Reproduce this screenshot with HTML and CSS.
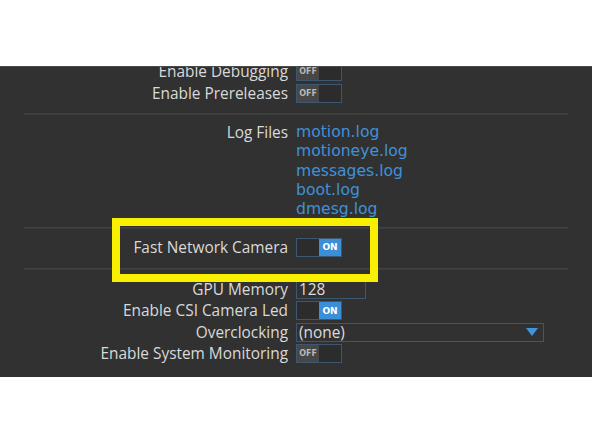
FILE: index.html
```html
<!DOCTYPE html>
<html>
<head>
<meta charset="utf-8">
<link rel="stylesheet" href="styles.css">
</head>
<body>
<div class="top"></div>
<div class="panel">
  <div class="content">
    <div class="group first">
      <div class="row"><div class="label">Enable Debugging</div><div class="value"><span class="toggle off"><span class="half l">OFF</span><span class="half r"></span></span></div></div>
      <div class="row"><div class="label">Enable Prereleases</div><div class="value"><span class="toggle off"><span class="half l">OFF</span><span class="half r"></span></span></div></div>
    </div>
    <div class="sep"></div>
    <div class="group logs">
      <div class="row log-row"><div class="label">Log Files</div>
        <div class="value links">
          <a>motion.log</a>
          <a>motioneye.log</a>
          <a>messages.log</a>
          <a>boot.log</a>
          <a>dmesg.log</a>
        </div>
      </div>
    </div>
    <div class="sep"></div>
    <div class="group fast">
      <div class="row"><div class="label">Fast Network Camera</div><div class="value"><span class="toggle on"><span class="half l"></span><span class="half r">ON</span></span></div></div>
    </div>
    <div class="sep"></div>
    <div class="group last">
      <div class="row"><div class="label">GPU Memory</div><div class="value"><span class="input">128</span></div></div>
      <div class="row"><div class="label">Enable CSI Camera Led</div><div class="value"><span class="toggle on"><span class="half l"></span><span class="half r">ON</span></span></div></div>
      <div class="row"><div class="label">Overclocking</div><div class="value"><span class="select">(none)<svg class="arrow" width="12" height="8" viewBox="0 0 12 8"><polygon points="0,0 12,0 6,8" fill="#3d95e0"/></svg></span></div></div>
      <div class="row"><div class="label">Enable System Monitoring</div><div class="value"><span class="toggle off"><span class="half l">OFF</span><span class="half r"></span></span></div></div>
    </div>
  </div>
  <div class="highlight"></div>
</div>
</body>
</html>
```
FILE: styles.css
```css
html, body {
  margin: 0;
  padding: 0;
  background: #ffffff;
  width: 592px;
  height: 444px;
  overflow: hidden;
  font-family: "Open Sans", "DejaVu Sans", sans-serif;
}
.top {
  height: 66px;
  background: #ffffff;
}
.panel {
  position: relative;
  height: 311px;
  background: #313131;
  border-top: 1px solid #4a4a4a;
  box-sizing: border-box;
  overflow: hidden;
}
.content {
  margin-top: -6px;
  display: flex;
  flex-direction: column;
}
.group {
  display: flex;
  flex-direction: column;
}
.first { padding-bottom: 9px; }
.logs { padding-top: 8px; padding-bottom: 7px; }
.fast { padding-top: 8px; padding-bottom: 10px; }
.last { padding-top: 8px; }
.row {
  display: grid;
  grid-template-columns: 288px 1fr;
  column-gap: 8px;
  height: 21.6px;
  align-items: center;
}
.label {
  text-align: right;
  color: #d9d9d9;
  font-size: 15.4px;
  white-space: nowrap;
}
.value {
  display: flex;
  align-items: center;
}
.log-row {
  height: auto;
  align-items: start;
}
.links {
  flex-direction: column;
  align-items: flex-start;
}
.links a {
  display: block;
  color: #3f92d8;
  font-family: "DejaVu Sans", sans-serif;
  font-size: 15.6px;
  line-height: 19.3px;
  height: 19.3px;
}
.log-row .label { line-height: 19.3px; }
.sep {
  margin: 0 24px;
  height: 2px;
  background: #3b3b3b;
  border-top: 1px solid #414141;
  box-sizing: border-box;
}
.toggle {
  display: flex;
  width: 46px;
  height: 19px;
  border: 1px solid #3e5770;
  box-sizing: border-box;
  background: #2c2c2c;
}
.half {
  flex: 1;
  display: flex;
  align-items: center;
  justify-content: center;
  font-size: 8px;
  font-weight: bold;
  font-family: "DejaVu Sans", sans-serif;
}
.toggle.off .l {
  background: #474747;
  color: #b8b8b8;
}
.toggle.on .r {
  background: #3a8fd6;
  color: #ffffff;
  font-size: 9px;
}
.input {
  width: 70px;
  height: 19px;
  border: 1px solid #3e5770;
  box-sizing: border-box;
  color: #dcdcdc;
  font-size: 15.4px;
  line-height: 17px;
  padding-left: 2px;
}
.select {
  width: 248px;
  height: 19px;
  border: 1px solid #3e5770;
  box-sizing: border-box;
  color: #dcdcdc;
  font-size: 15.4px;
  line-height: 17px;
  padding-left: 2px;
  display: flex;
  align-items: center;
  justify-content: space-between;
  padding-right: 5px;
}
.highlight {
  position: absolute;
  left: 112px;
  top: 151px;
  width: 266px;
  height: 64px;
  border: 8px solid #f8f000;
  box-sizing: border-box;
}
```
